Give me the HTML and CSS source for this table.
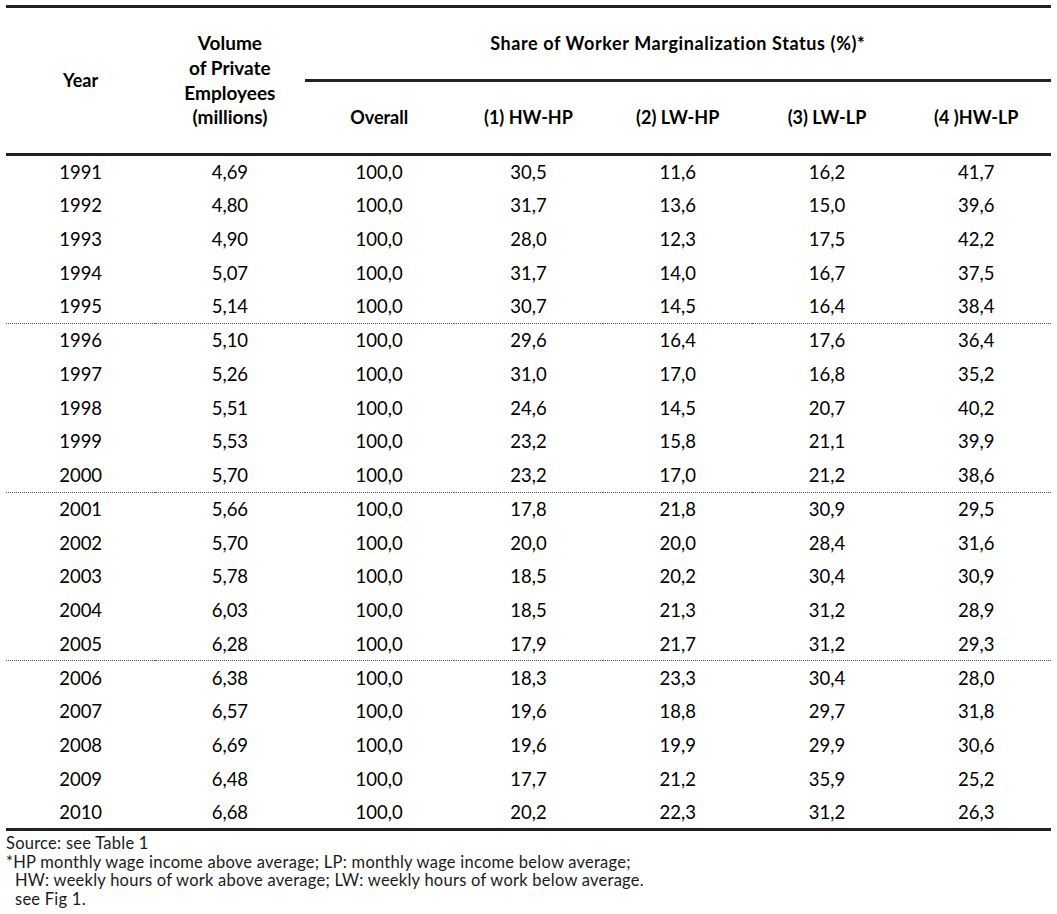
FILE: index.html
```html
<!DOCTYPE html>
<html>
<head>
<meta charset="utf-8">
<link rel="stylesheet" href="styles.css">
</head>
<body>
<div class="page">
<table class="data">
  <colgroup>
    <col class="c"><col class="c"><col class="c"><col class="c"><col class="c"><col class="c"><col class="c">
  </colgroup>
  <thead>
    <tr class="h1">
      <th rowspan="2" class="yr">Year</th>
      <th rowspan="2" class="vol">Volume<br>of Private<br>Employees<br>(millions)</th>
      <th colspan="5" class="share">Share of Worker Marginalization Status (%)*</th>
    </tr>
    <tr class="h2">
      <th>Overall</th>
      <th>(1) HW-HP</th>
      <th>(2) LW-HP</th>
      <th>(3) LW-LP</th>
      <th>(4 )HW-LP</th>
    </tr>
  </thead>
  <tbody>
    <tr><td>1991</td><td>4,69</td><td>100,0</td><td>30,5</td><td>11,6</td><td>16,2</td><td>41,7</td></tr>
    <tr><td>1992</td><td>4,80</td><td>100,0</td><td>31,7</td><td>13,6</td><td>15,0</td><td>39,6</td></tr>
    <tr><td>1993</td><td>4,90</td><td>100,0</td><td>28,0</td><td>12,3</td><td>17,5</td><td>42,2</td></tr>
    <tr><td>1994</td><td>5,07</td><td>100,0</td><td>31,7</td><td>14,0</td><td>16,7</td><td>37,5</td></tr>
    <tr class="sep"><td>1995</td><td>5,14</td><td>100,0</td><td>30,7</td><td>14,5</td><td>16,4</td><td>38,4</td></tr>
    <tr><td>1996</td><td>5,10</td><td>100,0</td><td>29,6</td><td>16,4</td><td>17,6</td><td>36,4</td></tr>
    <tr><td>1997</td><td>5,26</td><td>100,0</td><td>31,0</td><td>17,0</td><td>16,8</td><td>35,2</td></tr>
    <tr><td>1998</td><td>5,51</td><td>100,0</td><td>24,6</td><td>14,5</td><td>20,7</td><td>40,2</td></tr>
    <tr><td>1999</td><td>5,53</td><td>100,0</td><td>23,2</td><td>15,8</td><td>21,1</td><td>39,9</td></tr>
    <tr class="sep"><td>2000</td><td>5,70</td><td>100,0</td><td>23,2</td><td>17,0</td><td>21,2</td><td>38,6</td></tr>
    <tr><td>2001</td><td>5,66</td><td>100,0</td><td>17,8</td><td>21,8</td><td>30,9</td><td>29,5</td></tr>
    <tr><td>2002</td><td>5,70</td><td>100,0</td><td>20,0</td><td>20,0</td><td>28,4</td><td>31,6</td></tr>
    <tr><td>2003</td><td>5,78</td><td>100,0</td><td>18,5</td><td>20,2</td><td>30,4</td><td>30,9</td></tr>
    <tr><td>2004</td><td>6,03</td><td>100,0</td><td>18,5</td><td>21,3</td><td>31,2</td><td>28,9</td></tr>
    <tr class="sep"><td>2005</td><td>6,28</td><td>100,0</td><td>17,9</td><td>21,7</td><td>31,2</td><td>29,3</td></tr>
    <tr><td>2006</td><td>6,38</td><td>100,0</td><td>18,3</td><td>23,3</td><td>30,4</td><td>28,0</td></tr>
    <tr><td>2007</td><td>6,57</td><td>100,0</td><td>19,6</td><td>18,8</td><td>29,7</td><td>31,8</td></tr>
    <tr><td>2008</td><td>6,69</td><td>100,0</td><td>19,6</td><td>19,9</td><td>29,9</td><td>30,6</td></tr>
    <tr><td>2009</td><td>6,48</td><td>100,0</td><td>17,7</td><td>21,2</td><td>35,9</td><td>25,2</td></tr>
    <tr><td>2010</td><td>6,68</td><td>100,0</td><td>20,2</td><td>22,3</td><td>31,2</td><td>26,3</td></tr>
  </tbody>
</table>
<div class="notes">
  <p>Source: see Table 1</p>
  <p>*HP monthly wage income above average; LP: monthly wage income below average;</p>
  <p class="ind">HW: weekly hours of work above average; LW: weekly hours of work below average.</p>
  <p class="ind">see Fig 1.</p>
</div>
</div>
</body>
</html>
```
FILE: styles.css
```css
html, body {
  margin: 0;
  padding: 0;
  background: #fff;
}
.page {
  padding: 5px 6px 0 6px;
  font-family: Lato, "Open Sans", sans-serif;
  color: #000;
}
.data {
  width: 1045px;
  border-collapse: collapse;
  table-layout: fixed;
  border-top: 3px solid #222;
  border-bottom: 3px solid #222;
}
.data col.c {
  width: 149.28px;
}
.data th {
  font-weight: 700;
  font-size: 18px;
  line-height: 24.7px;
  text-align: center;
  vertical-align: middle;
  padding: 0;
}
.data th.vol {
  font-size: 19px;
}
.data th.share {
  font-size: 18px;
  letter-spacing: 0.6px;
  border-bottom: 3px solid #222;
}
.data tr.h1 {
  height: 74px;
}
.data tr.h2 {
  height: 74px;
}
.data thead {
  border-bottom: 3px solid #222;
}
.data tbody tr {
  height: 33.75px;
}
.data td {
  font-size: 18.5px;
  text-align: center;
  vertical-align: middle;
  padding: 0;
  line-height: 20px;
}
.data tr.sep td {
  border-bottom: 1px dotted #555;
}
.notes {
  padding-top: 3px;
  font-family: Lato, "Open Sans", sans-serif;
  font-size: 16.5px;
  letter-spacing: 0.25px;
  line-height: 18.5px;
  color: #1a1a1a;
}
.notes p {
  margin: 0;
}
.notes p.ind {
  padding-left: 9px;
}
```
